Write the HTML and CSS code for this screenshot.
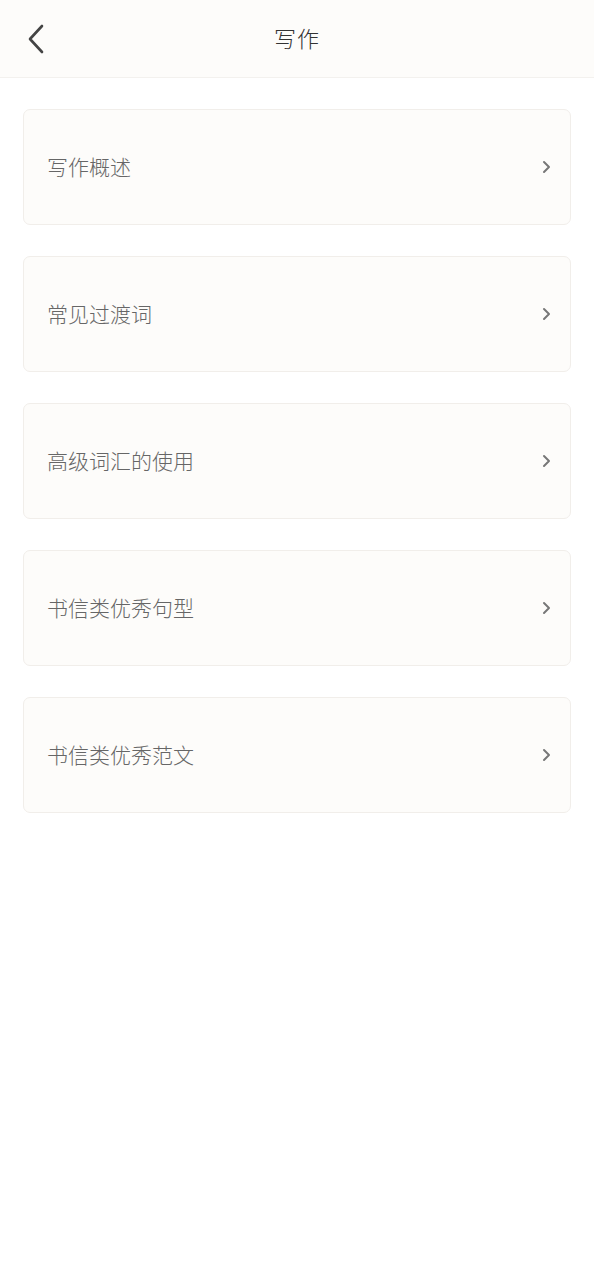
FILE: index.html
```html
<!DOCTYPE html>
<html>
  <head>
    <meta charset="utf-8">
    <meta name="viewport" content="width=device-width">
    <title>写作</title>
    <link rel="stylesheet" href="styles.css">
  </head>
  <body>
    <div class="topbar">
      <svg class="back" viewBox="0 0 20 30" width="20" height="30">
        <path d="M16 2 L4 15 L16 28" />
      </svg>
      <div class="title">写作</div>
    </div>

    <!-- Writing topics -->
    <div class="list">
      <div class="item">
        <span class="label">写作概述</span>
        <svg class="arrow" viewBox="0 0 10 14" width="10" height="14"><path d="M2 2 L7 7 L2 12" /></svg>
      </div>
      <div class="item">
        <span class="label">常见过渡词</span>
        <svg class="arrow" viewBox="0 0 10 14" width="10" height="14"><path d="M2 2 L7 7 L2 12" /></svg>
      </div>
      <div class="item">
        <span class="label">高级词汇的使用</span>
        <svg class="arrow" viewBox="0 0 10 14" width="10" height="14"><path d="M2 2 L7 7 L2 12" /></svg>
      </div>
      <div class="item">
        <span class="label">书信类优秀句型</span>
        <svg class="arrow" viewBox="0 0 10 14" width="10" height="14"><path d="M2 2 L7 7 L2 12" /></svg>
      </div>
      <div class="item">
        <span class="label">书信类优秀范文</span>
        <svg class="arrow" viewBox="0 0 10 14" width="10" height="14"><path d="M2 2 L7 7 L2 12" /></svg>
      </div>
    </div>
  </body>
</html>
```

FILE: styles.css
```css
body {
  margin: 0;
  background: #fff;
  font-family: "Noto Sans CJK SC", "Noto Sans", sans-serif;
}

.topbar {
  position: relative;
  height: 77px;
  background: #fdfcfa;
  border-bottom: 1px solid #f3f1ee;
  display: flex;
  align-items: center;
  justify-content: center;
}
.topbar .back {
  position: absolute;
  left: 26px;
  top: 24px;
}
.back path {
  fill: none;
  stroke: #444;
  stroke-width: 2.6;
  stroke-linecap: round;
  stroke-linejoin: round;
}
.title {
  font-size: 22px;
  font-weight: 300;
  color: #333;
  letter-spacing: 1px;
  margin-top: -3px;
}

.list {
  padding: 31px 23px 0 23px;
  display: flex;
  flex-direction: column;
  gap: 31px;
}
.item {
  height: 114px;
  border: 1px solid #f1eeea;
  border-radius: 7px;
  background: #fdfcfa;
  display: flex;
  align-items: center;
  justify-content: space-between;
  padding: 0 18px 0 23px;
}
.label {
  font-size: 21px;
  font-weight: 300;
  color: #666;
  margin-top: -2px;
}
.arrow path {
  fill: none;
  stroke: #777;
  stroke-width: 2;
  stroke-linecap: round;
  stroke-linejoin: round;
}
```
